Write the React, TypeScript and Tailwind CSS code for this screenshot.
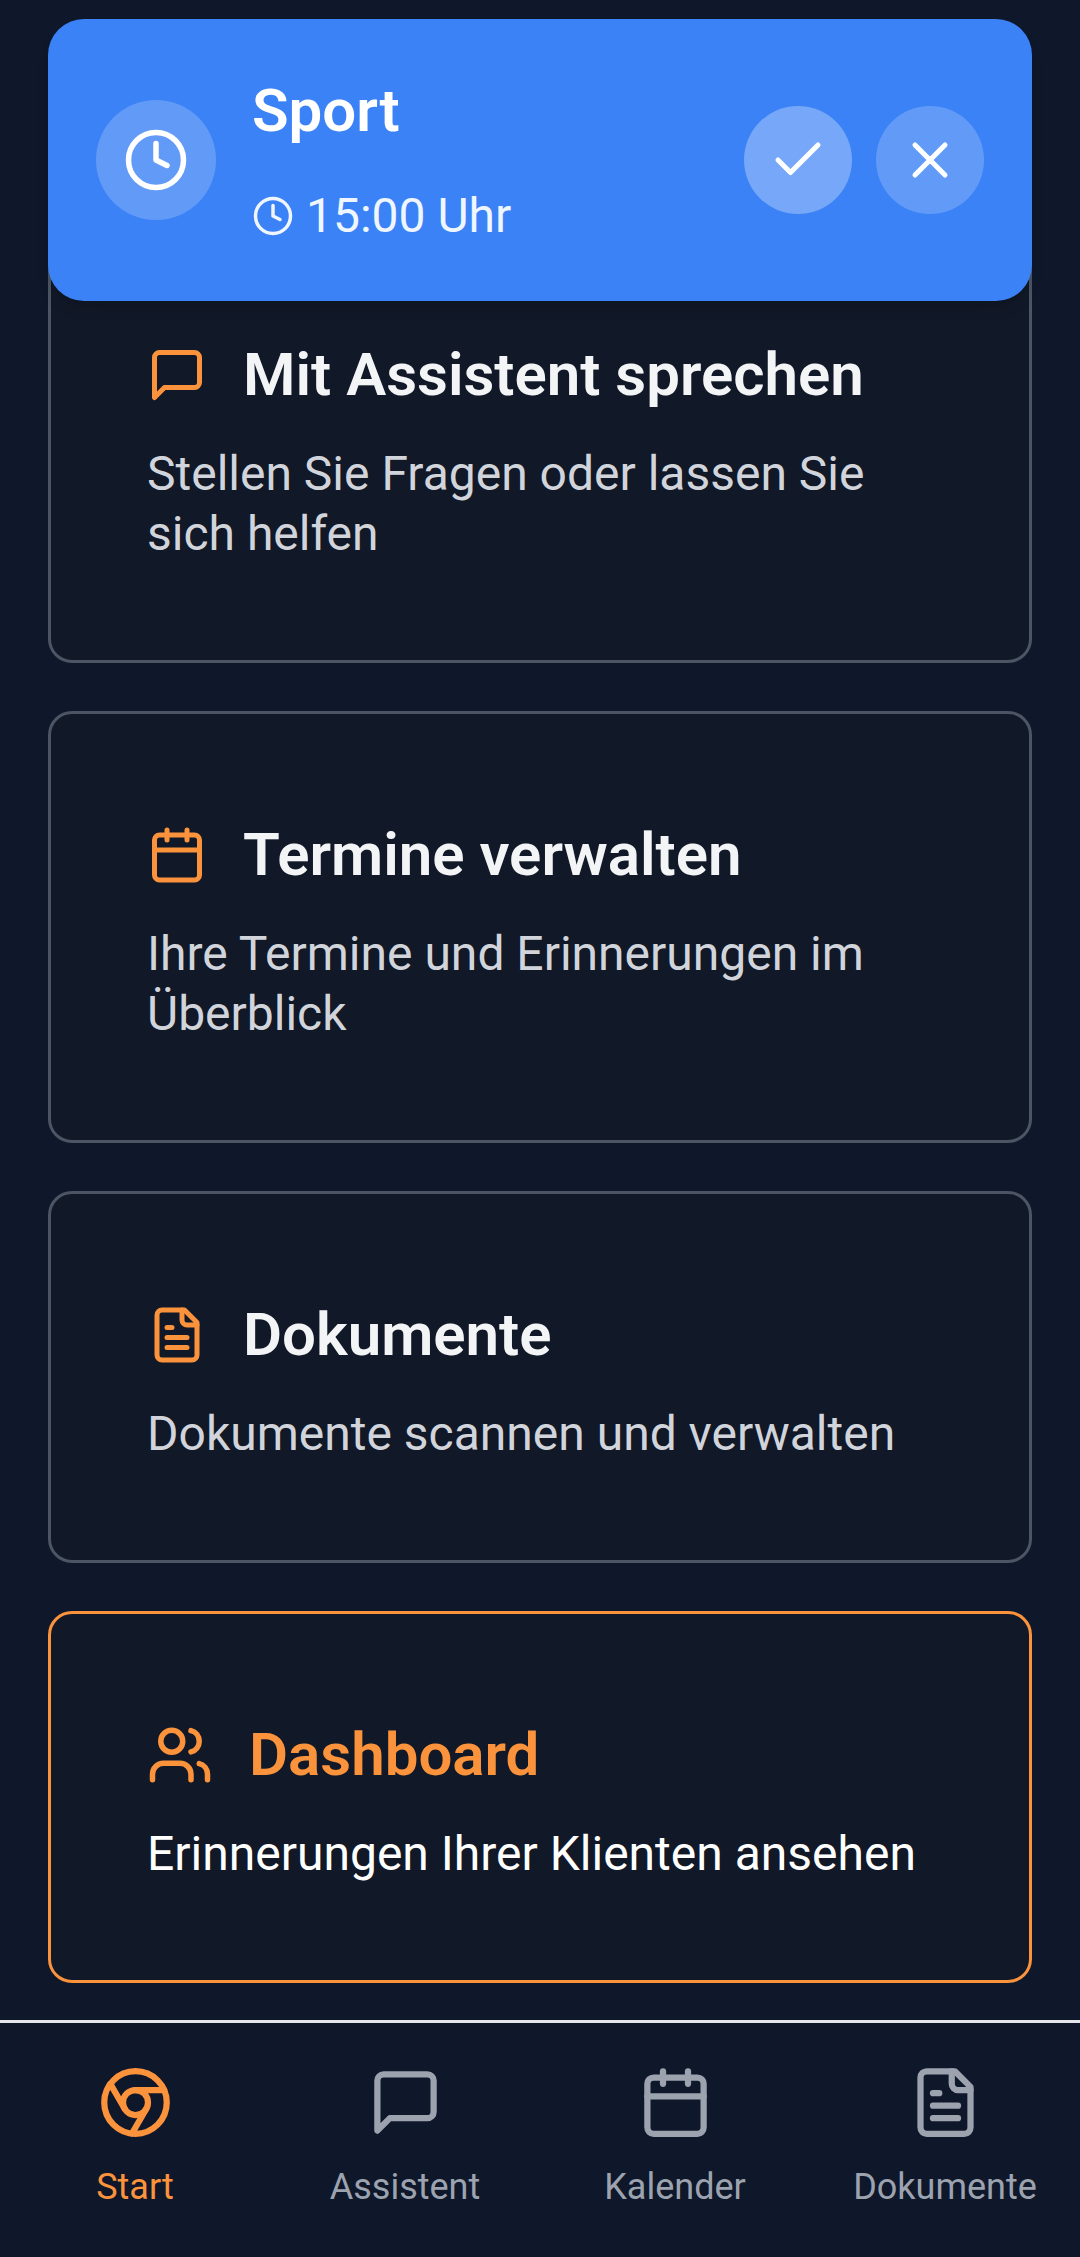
import React from "react";
import { Calendar, Check, Chrome, Clock, Users, X } from "lucide-react";

type IconProps = { className?: string };

function MessageIcon({ className }: IconProps) {
  return (
    <svg className={className} viewBox="0 0 24 24" fill="none" stroke="currentColor" strokeWidth={2} strokeLinecap="round" strokeLinejoin="round">
      <path d="M21 15a2 2 0 0 1-2 2H7l-4 4V5a2 2 0 0 1 2-2h14a2 2 0 0 1 2 2z" />
    </svg>
  );
}

function FileIcon({ className }: IconProps) {
  return (
    <svg className={className} viewBox="0 0 24 24" fill="none" stroke="currentColor" strokeWidth={2} strokeLinecap="round" strokeLinejoin="round">
      <path d="M15 2H6a2 2 0 0 0-2 2v16a2 2 0 0 0 2 2h12a2 2 0 0 0 2-2V7Z" />
      <path d="M14 2v4a2 2 0 0 0 2 2h4" />
      <path d="M10 9H8" />
      <path d="M16 13H8" />
      <path d="M16 17H8" />
    </svg>
  );
}

const cards = [
  { Icon: MessageIcon, title: "Mit Assistent sprechen", desc: "Stellen Sie Fragen oder lassen Sie sich helfen" },
  { Icon: Calendar, title: "Termine verwalten", desc: "Ihre Termine und Erinnerungen im Überblick" },
  { Icon: FileIcon, title: "Dokumente", desc: "Dokumente scannen und verwalten" },
];

const nav = [
  { Icon: Chrome, label: "Start", active: true },
  { Icon: MessageIcon, label: "Assistent", active: false },
  { Icon: Calendar, label: "Kalender", active: false },
  { Icon: FileIcon, label: "Dokumente", active: false },
];

export default function App() {
  return (
    <div className="relative flex h-[2257px] w-[1080px] flex-col overflow-hidden bg-[#0f172a] font-['Roboto',sans-serif]">
      <div className="absolute left-[48px] top-[19px] z-10 flex h-[282px] w-[984px] items-center rounded-[36px] bg-[#3b82f6] pl-[48px] pr-[48px] shadow-lg">
        <div className="flex h-[120px] w-[120px] items-center justify-center rounded-full bg-white/20">
          <Clock className="h-[66px] w-[66px] text-white" strokeWidth={2} />
        </div>
        <div className="ml-[36px] flex flex-1 flex-col">
          <div className="text-[60px] font-semibold leading-[72px] text-white">Sport</div>
          <div className="mt-[39px] flex items-center gap-[12px] text-[48px] leading-[60px] text-blue-50">
            <Clock className="h-[42px] w-[42px]" strokeWidth={2} />
            <span>15:00 Uhr</span>
          </div>
        </div>
        <div className="flex gap-[24px]">
          <div className="flex h-[108px] w-[108px] items-center justify-center rounded-full bg-white/30">
            <Check className="h-[60px] w-[60px] text-white" strokeWidth={2} />
          </div>
          <div className="flex h-[108px] w-[108px] items-center justify-center rounded-full bg-white/20">
            <X className="h-[60px] w-[60px] text-white" strokeWidth={2} />
          </div>
        </div>
      </div>

      <main className="flex flex-1 flex-col gap-[48px] px-[48px] pt-[231px]">
        {cards.map(({ Icon, title, desc }) => (
          <div key={title} className="rounded-[24px] border-[3px] border-[#4b5563] bg-[#111827] px-[96px] pb-[96px] pt-[99px]">
            <div className="flex h-[84px] items-center gap-[36px]">
              <Icon className="h-[60px] w-[60px] shrink-0 text-[#fb923c]" />
              <h2 className="text-[60px] font-semibold leading-[84px] text-[#f3f4f6]">{title}</h2>
            </div>
            <p className="mt-[27px] text-[48px] leading-[60px] text-[#d1d5db]">{desc}</p>
          </div>
        ))}
        <div className="rounded-[24px] border-[3px] border-[#fb923c] bg-[#111827] px-[96px] pb-[96px] pt-[99px]">
          <div className="flex h-[84px] items-center gap-[36px]">
            <Users className="h-[66px] w-[66px] shrink-0 text-[#fb923c]" strokeWidth={2} />
            <h2 className="text-[60px] font-semibold leading-[84px] text-[#fb923c]">Dashboard</h2>
          </div>
          <p className="mt-[27px] text-[48px] leading-[60px] text-white">Erinnerungen Ihrer Klienten ansehen</p>
        </div>
      </main>

      <nav className="grid h-[237px] grid-cols-4 border-t-[3px] border-[#e5e7eb] bg-[#0f172a]">
        {nav.map(({ Icon, label, active }) => (
          <div key={label} className={`flex flex-col items-center pt-[42px] ${active ? "text-[#fb923c]" : "text-[#9ca3af]"}`}>
            <Icon className="h-[75px] w-[75px]" />
            <span className="mt-[23px] text-[36px] leading-[48px]">{label}</span>
          </div>
        ))}
      </nav>
    </div>
  );
}
